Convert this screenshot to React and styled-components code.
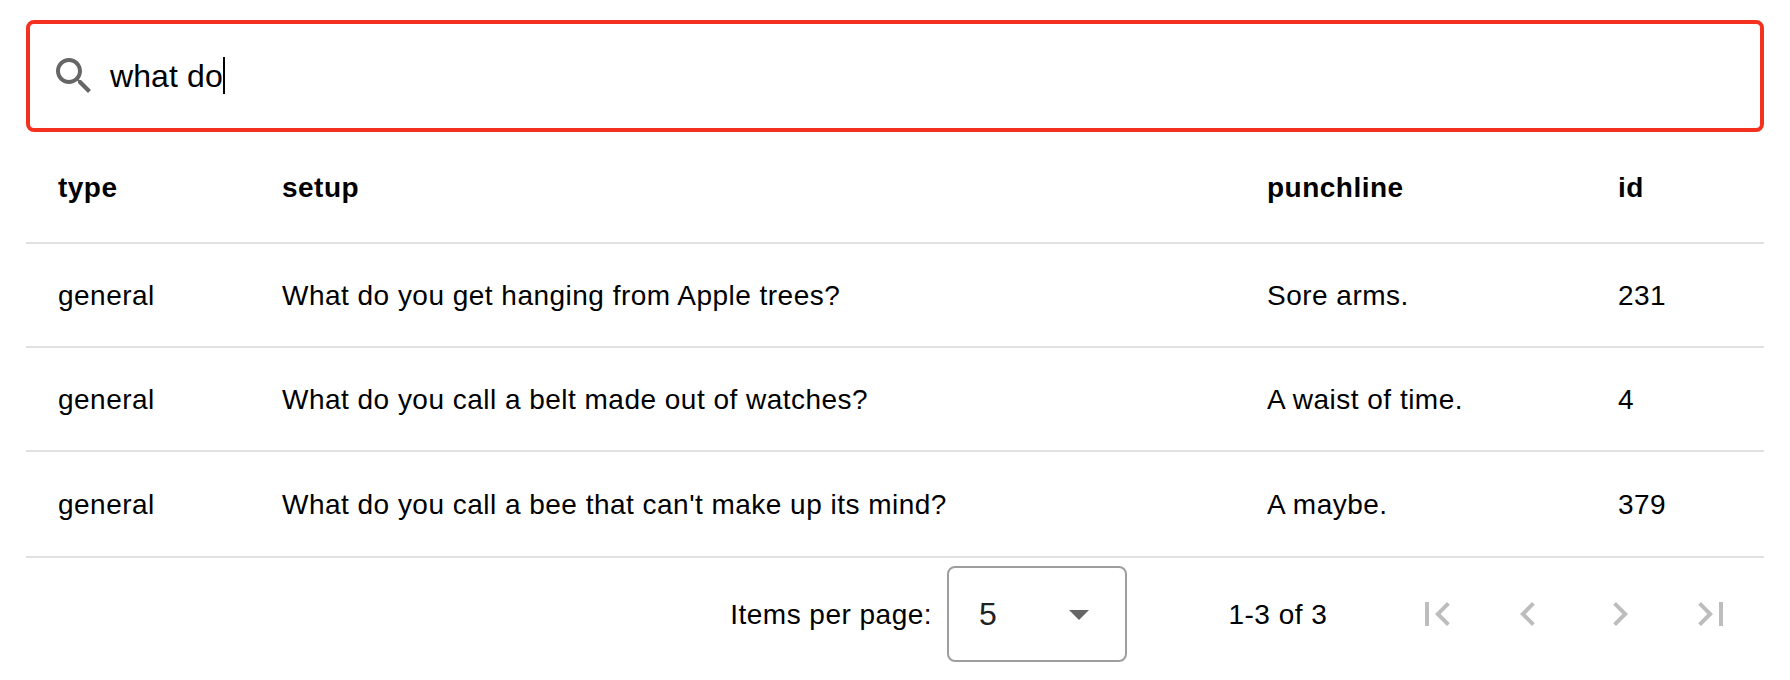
import React from "react";
import styled, { createGlobalStyle } from "styled-components";

const GlobalStyle = createGlobalStyle`
  *, *::before, *::after { box-sizing: border-box; }
  body {
    margin: 0;
    background: #fff;
    color: #000;
    font-family: "Liberation Sans", Helvetica, Arial, sans-serif;
    font-size: 28px;
    -webkit-font-smoothing: antialiased;
  }
`;

const Page = styled.main`
  padding: 20px 26px 0;
`;

const SearchField = styled.div`
  display: flex;
  align-items: center;
  height: 112px;
  padding: 0 20px;
  border: 4px solid #f4301e;
  border-radius: 8px;
`;

const SearchIcon = styled.svg`
  flex: none;
  width: 48px;
  height: 48px;
  fill: #666;
`;

const Query = styled.span`
  margin-left: 12px;
  font-size: 32px;
  line-height: 38px;
  letter-spacing: 0.1px;
  white-space: pre;
`;

const Caret = styled.span`
  width: 2px;
  height: 37px;
  margin-bottom: 1px;
  background: #000;
`;

const Table = styled.table`
  width: 100%;
  table-layout: fixed;
  border-collapse: separate;
  border-spacing: 0;
  letter-spacing: 0.48px;
`;

const Column = styled.col`
  width: ${(p) => p.$width};
`;

const HeaderCell = styled.th`
  height: 112px;
  padding: 2px 32px 0;
  border-bottom: 2px solid #e0e0e0;
  font-weight: 700;
  line-height: 40px;
  text-align: left;
`;

const Cell = styled.td`
  height: ${(p) => (p.$last ? 106 : 104)}px;
  padding: 2px 32px 0;
  border-bottom: 2px solid #e0e0e0;
  line-height: 40px;
  white-space: nowrap;
`;

const Paginator = styled.footer`
  display: flex;
  align-items: center;
  justify-content: flex-end;
  height: 112px;
  padding-right: 29px;
  letter-spacing: 0.48px;
`;

const PageSize = styled.div`
  display: flex;
  align-items: center;
  gap: 15px;
`;

const Label = styled.span`
  padding-top: 2px;
  white-space: nowrap;
`;

const Select = styled.div`
  display: flex;
  align-items: center;
  justify-content: space-between;
  width: 180px;
  height: 96px;
  padding: 0 36px 0 30px;
  border: 2px solid #9e9e9e;
  border-radius: 8px;
  color: #212121;
  font-size: 32px;
  line-height: 48px;
`;

const SelectArrow = styled.svg`
  width: 20px;
  height: 10px;
  margin-top: 2px;
  fill: #666;
`;

const Range = styled(Label)`
  width: 98px;
  margin: 0 86.5px 0 101.5px;
`;

const PageButtons = styled.nav`
  display: flex;
  gap: 43.33px;
`;

const PageButton = styled.button`
  display: flex;
  width: 48px;
  height: 48px;
  padding: 0;
  border: 0;
  background: none;
`;

const PageIcon = styled.svg`
  width: 48px;
  height: 48px;
  fill: #bdbdbd;
`;

const COLUMNS = [
  { key: "type", width: "224px" },
  { key: "setup", width: "985px" },
  { key: "punchline", width: "351px" },
  { key: "id", width: "auto" },
];

const JOKES = [
  { type: "general", setup: "What do you get hanging from Apple trees?", punchline: "Sore arms.", id: 231 },
  { type: "general", setup: "What do you call a belt made out of watches?", punchline: "A waist of time.", id: 4 },
  { type: "general", setup: "What do you call a bee that can't make up its mind?", punchline: "A maybe.", id: 379 },
];

const PAGE_ACTIONS = [
  { label: "First page", path: "M18.41 16.59L13.82 12l4.59-4.59L17 6l-6 6 6 6zM6 6h2v12H6z" },
  { label: "Previous page", path: "M15.41 7.41L14 6l-6 6 6 6 1.41-1.41L10.83 12z" },
  { label: "Next page", path: "M10 6L8.59 7.41 13.17 12l-4.58 4.59L10 18l6-6z" },
  { label: "Last page", path: "M5.59 7.41L10.18 12l-4.59 4.59L7 18l6-6-6-6zM16 6h2v12h-2z" },
];

export default function App() {
  return (
    <Page>
      <GlobalStyle />
      <SearchField>
        <SearchIcon viewBox="0 0 24 24">
          <path d="M15.5 14h-.79l-.28-.27C15.41 12.59 16 11.11 16 9.5 16 5.91 13.09 3 9.5 3S3 5.91 3 9.5 5.91 16 9.5 16c1.61 0 3.09-.59 4.23-1.57l.27.28v.79l5 4.99L20.49 19l-4.99-5zm-6 0C7.01 14 5 11.99 5 9.5S7.01 5 9.5 5 14 7.01 14 9.5 11.99 14 9.5 14z" />
        </SearchIcon>
        <Query>what do</Query>
        <Caret />
      </SearchField>
      <Table>
        <colgroup>
          {COLUMNS.map((c) => (
            <Column key={c.key} $width={c.width} />
          ))}
        </colgroup>
        <thead>
          <tr>
            {COLUMNS.map((c) => (
              <HeaderCell key={c.key}>{c.key}</HeaderCell>
            ))}
          </tr>
        </thead>
        <tbody>
          {JOKES.map((joke, i) => (
            <tr key={joke.id}>
              {COLUMNS.map((c) => (
                <Cell key={c.key} $last={i === JOKES.length - 1}>
                  {joke[c.key]}
                </Cell>
              ))}
            </tr>
          ))}
        </tbody>
      </Table>
      <Paginator>
        <PageSize>
          <Label>Items per page:</Label>
          <Select>
            <span>5</span>
            <SelectArrow viewBox="0 0 10 5">
              <path d="M0 0l5 5 5-5z" />
            </SelectArrow>
          </Select>
        </PageSize>
        <Range>1-3 of 3</Range>
        <PageButtons>
          {PAGE_ACTIONS.map((a) => (
            <PageButton key={a.label} aria-label={a.label} disabled>
              <PageIcon viewBox="0 0 24 24">
                <path d={a.path} />
              </PageIcon>
            </PageButton>
          ))}
        </PageButtons>
      </Paginator>
    </Page>
  );
}
